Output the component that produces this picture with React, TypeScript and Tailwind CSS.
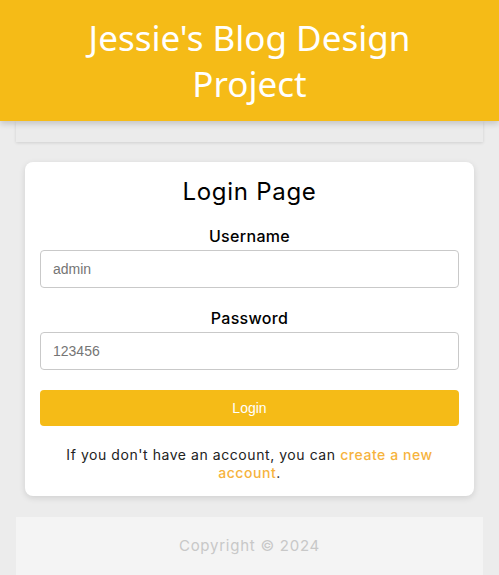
export default function App() {
  return (
    <div className="min-h-screen bg-[#ececec] font-['Inter',sans-serif] text-black">
      <header className="relative z-10 bg-[#f5bb17] px-6 pt-[15px] pb-[14px] text-center shadow-[0_3px_6px_rgba(0,0,0,0.16)]">
        <h1 className="font-['Noto_Sans',sans-serif] text-[35px] leading-[46px] text-white">
          Jessie's Blog Design
          <br />
          Project
        </h1>
      </header>
      <nav className="mx-4 h-[21px] bg-[#ebebeb] shadow-[0_1px_3px_rgba(0,0,0,0.12)]" />

      <main className="mx-[25px] mt-5 rounded-lg bg-white px-[15px] pt-[14px] pb-[14px] shadow-[0_2px_6px_rgba(0,0,0,0.12)]">
        <h2 className="text-center text-[24px] leading-[32px] tracking-[0.03em]">Login Page</h2>
        <form className="mt-[17px]">
          <label className="block text-center text-[16px] leading-[22px] font-medium tracking-[0.02em]" htmlFor="username">
            Username
          </label>
          <input
            id="username"
            className="mt-[3px] block h-[38px] w-full rounded border border-[#c9c9c9] px-3 font-['Liberation_Sans',sans-serif] text-[14px] placeholder:text-[#757575]"
            placeholder="admin"
          />
          <label className="mt-[19px] block text-center text-[16px] leading-[22px] font-medium tracking-[0.02em]" htmlFor="password">
            Password
          </label>
          <input
            id="password"
            type="password"
            className="mt-[3px] block h-[38px] w-full rounded border border-[#c9c9c9] px-3 font-['Liberation_Sans',sans-serif] text-[14px] placeholder:text-[#757575]"
            placeholder="123456"
          />
          <button
            type="button"
            className="mt-[20px] block h-[36px] w-full rounded bg-[#f5bb17] font-['Liberation_Sans',sans-serif] text-[14px] text-white"
          >
            Login
          </button>
        </form>
        <p className="mx-auto mt-[20px] max-w-[400px] text-center text-[14px] leading-[18px] tracking-[0.04em] text-[#222]">
          If you don't have an account, you can{" "}
          <a href="#" className="font-medium text-[#f6b33d]">
            create a new account
          </a>
          .
        </p>
      </main>

      <footer className="mx-4 mt-[21px] h-[80px] bg-[#f4f4f4] pt-[18px] text-center text-[15px] tracking-[0.05em] text-[#c8c8c8]">
        Copyright © 2024
      </footer>
    </div>
  );
}
